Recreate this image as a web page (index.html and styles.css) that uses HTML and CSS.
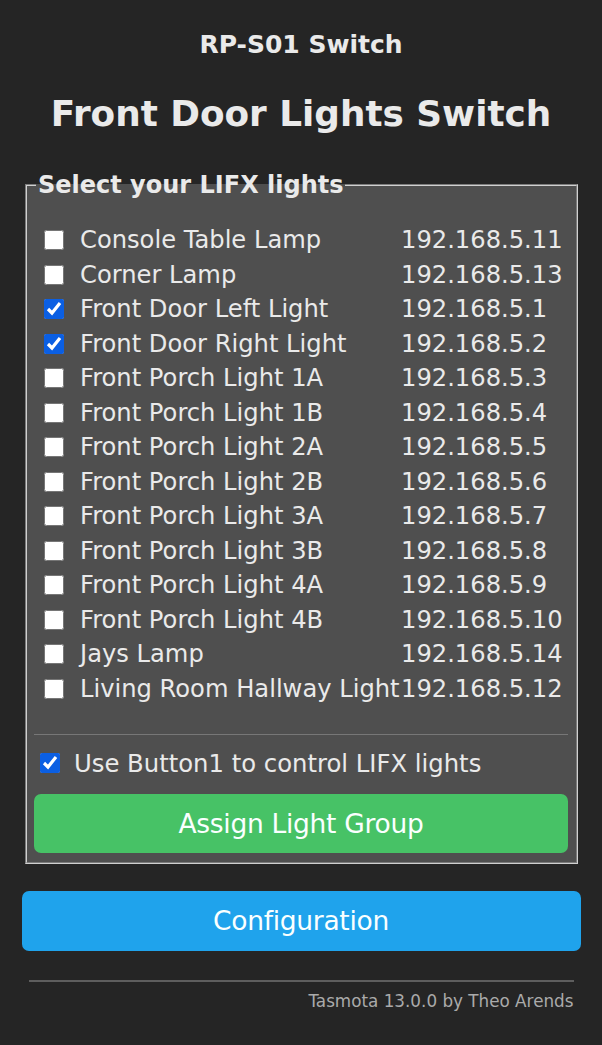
FILE: index.html
```html
<!DOCTYPE html>
<html>
<head>
<meta charset="utf-8">
<link rel="stylesheet" href="styles.css">
</head>
<body>
<div class="wrap">
  <h3 class="module">RP-S01 Switch</h3>
  <h2 class="device">Front Door Lights Switch</h2>
  <fieldset class="box">
    <legend class="legend">Select your LIFX lights</legend>
    <div class="list">
      <label class="row"><input type="checkbox" class="cb"><span class="name">Console Table Lamp</span><span class="ip">192.168.5.11</span></label>
      <label class="row"><input type="checkbox" class="cb"><span class="name">Corner Lamp</span><span class="ip">192.168.5.13</span></label>
      <label class="row"><input type="checkbox" class="cb" checked><span class="name">Front Door Left Light</span><span class="ip">192.168.5.1</span></label>
      <label class="row"><input type="checkbox" class="cb" checked><span class="name">Front Door Right Light</span><span class="ip">192.168.5.2</span></label>
      <label class="row"><input type="checkbox" class="cb"><span class="name">Front Porch Light 1A</span><span class="ip">192.168.5.3</span></label>
      <label class="row"><input type="checkbox" class="cb"><span class="name">Front Porch Light 1B</span><span class="ip">192.168.5.4</span></label>
      <label class="row"><input type="checkbox" class="cb"><span class="name">Front Porch Light 2A</span><span class="ip">192.168.5.5</span></label>
      <label class="row"><input type="checkbox" class="cb"><span class="name">Front Porch Light 2B</span><span class="ip">192.168.5.6</span></label>
      <label class="row"><input type="checkbox" class="cb"><span class="name">Front Porch Light 3A</span><span class="ip">192.168.5.7</span></label>
      <label class="row"><input type="checkbox" class="cb"><span class="name">Front Porch Light 3B</span><span class="ip">192.168.5.8</span></label>
      <label class="row"><input type="checkbox" class="cb"><span class="name">Front Porch Light 4A</span><span class="ip">192.168.5.9</span></label>
      <label class="row"><input type="checkbox" class="cb"><span class="name">Front Porch Light 4B</span><span class="ip">192.168.5.10</span></label>
      <label class="row"><input type="checkbox" class="cb"><span class="name">Jays Lamp</span><span class="ip">192.168.5.14</span></label>
      <label class="row"><input type="checkbox" class="cb"><span class="name">Living Room Hallway Light</span><span class="ip">192.168.5.12</span></label>
    </div>
    <hr class="sep">
    <label class="opt"><input type="checkbox" class="cb cb-opt" checked><span>Use Button1 to control LIFX lights</span></label>
    <button class="btn btn-green">Assign Light Group</button>
  </fieldset>
  <button class="btn btn-blue">Configuration</button>
  <hr class="foot-sep">
  <div class="footer">Tasmota 13.0.0 by Theo Arends</div>
</div>
</body>
</html>
```
FILE: styles.css
```css
html, body {
  margin: 0;
  padding: 0;
  background: #252525;
}
body {
  font-family: "DejaVu Sans", Verdana, sans-serif;
  color: #eaeaea;
}
.wrap {
  width: 559px;
  margin: 0 auto;
}
.module {
  margin: 0;
  padding-top: 27px;
  text-align: center;
  font-size: 25px;
  font-weight: bold;
  line-height: 36px;
}
.device {
  margin: 0;
  padding-top: 30px;
  text-align: center;
  font-size: 35.8px;
  font-weight: bold;
  line-height: 42px;
}
.box {
  margin: 36px 3px 0;
  padding: 0 7.5px 9px;
  background: #4f4f4f;
  border: 2px groove #d0d0d0;
  min-width: 0;
}
.legend {
  padding: 0 2px;
  margin-left: 2px;
  font-size: 24px;
  font-weight: bold;
  line-height: 28px;
}
.list {
  padding-top: 24px;
  padding-bottom: 28px;
}
.row {
  display: grid;
  grid-template-columns: 46px 321px 1fr;
  align-items: center;
  height: 34.5px;
  font-size: 24.2px;
  white-space: nowrap;
}
.cb {
  margin: 0 0 0 10px;
  width: 20px;
  height: 20px;
  accent-color: #0b5fe3;
}
.sep {
  margin: 0;
  border: 0;
  border-top: 1px solid #777;
}
.opt {
  display: flex;
  align-items: center;
  gap: 14px;
  height: 34px;
  margin-top: 11px;
  padding-left: 6px;
  font-size: 24.3px;
}
.cb-opt {
  margin: 0;
}
.btn {
  display: block;
  width: 100%;
  border: 0;
  border-radius: 7px;
  color: #faffff;
  font-family: "DejaVu Sans", sans-serif;
  font-size: 26.5px;
  letter-spacing: -0.3px;
  line-height: 59px;
  height: 59px;
  padding: 0;
}
.btn-green {
  margin-top: 14px;
  background: #47c266;
}
.btn-blue {
  margin-top: 27px;
  background: #1fa3ec;
  height: 60px;
  line-height: 60px;
}
.foot-sep {
  margin: 29px 7px 0;
  border: 0;
  border-top: 2px solid #5e5e5e;
}
.footer {
  text-align: right;
  padding: 9px 7px 0;
  font-size: 16.8px;
  color: #aaa;
}
```
